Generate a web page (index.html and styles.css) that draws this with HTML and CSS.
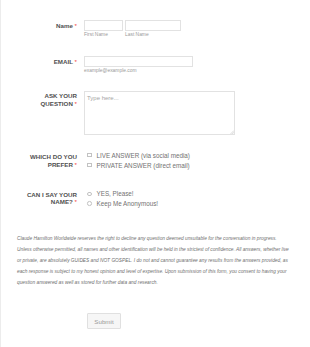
FILE: index.html
```html
<!DOCTYPE html>
<html lang="en">
<head>
    <meta charset="UTF-8">
    <meta name="viewport" content="width=device-width, initial-scale=1.0">
    <title>Ask Your Question</title>
    <link rel="stylesheet" href="styles.css">
</head>
<body>
    <form class="form" action="javascript:void(0);">
        <!-- name -->
        <div class="form-line line-name">
            <label class="form-label">Name <span class="req">*</span></label>
            <div class="form-input">
                <div class="name-row">
                    <div class="name-part">
                        <input type="text" class="text-input first-name">
                        <span class="sublabel">First Name</span>
                    </div>
                    <div class="name-part">
                        <input type="text" class="text-input last-name">
                        <span class="sublabel">Last Name</span>
                    </div>
                </div>
            </div>
        </div>

        <!-- email -->
        <div class="form-line line-email">
            <label class="form-label">EMAIL <span class="req">*</span></label>
            <div class="form-input">
                <input type="email" class="text-input email">
                <span class="sublabel">example@example.com</span>
            </div>
        </div>

        <!-- question -->
        <div class="form-line line-question">
            <label class="form-label multi">ASK YOUR<br>QUESTION <span class="req">*</span></label>
            <div class="form-input question-wrap">
                <textarea class="question" placeholder="Type here..."></textarea>
                <svg class="grip" width="4" height="4" viewBox="0 0 4 4"><path d="M4 0.5 L0.5 4 M4 2.2 L2.2 4" stroke="#b5b5b5" stroke-width="0.5" fill="none"/></svg>
            </div>
        </div>

        <!-- prefer -->
        <div class="form-line line-prefer">
            <label class="form-label multi">WHICH DO YOU<br>PREFER <span class="req">*</span></label>
            <div class="form-input options">
                <label class="option"><input type="checkbox" class="box"> LIVE ANSWER (via social media)</label>
                <label class="option"><input type="checkbox" class="box"> PRIVATE ANSWER (direct email)</label>
            </div>
        </div>

        <!-- say name -->
        <div class="form-line line-sayname">
            <label class="form-label multi">CAN I SAY YOUR<br>NAME? <span class="req">*</span></label>
            <div class="form-input options">
                <label class="option"><input type="radio" name="sayname" class="box round"> YES, Please!</label>
                <label class="option"><input type="radio" name="sayname" class="box round"> Keep Me Anonymous!</label>
            </div>
        </div>

        <p class="notice">Claude Hamilton Worldwide reserves the right to decline any question deemed unsuitable for the conversation in progress.<br>Unless otherwise permitted, all names and other identification will be held in the strictest of confidence. All answers, whether live<br>or private, are absolutely GUIDES and NOT GOSPEL. I do not and cannot guarantee any results from the answers provided, as<br>each response is subject to my honest opinion and level of expertise. Upon submission of this form, you consent to having your<br>question answered as well as stored for further data and research.</p>

        <button type="submit" class="submit-btn">Submit</button>
    </form>
</body>
</html>
```

FILE: styles.css
```css
* {
    margin: 0;
    padding: 0;
    box-sizing: border-box;
}

body {
    background-color: #fff;
    font-family: "Liberation Sans", Arial, sans-serif;
    color: #555;
}

.form {
    min-height: 100vh;
    padding-top: 20px;
    border-left: 1px solid #ececec;
}

.form-line {
    display: flex;
    align-items: flex-start;
}

.form-label {
    width: 76px;
    flex-shrink: 0;
    text-align: right;
    font-size: 6.2px;
    font-weight: 700;
    line-height: 11px;
    color: #505050;
}

.form-label.multi {
    line-height: 7.5px;
}

.req {
    color: #f23a3c;
    font-weight: 400;
}

.form-input {
    margin-left: 7px;
}

.text-input {
    display: block;
    height: 11px;
    border: 1px solid #e2e2e2;
    background: #fff;
    outline: none;
}

.name-row {
    display: flex;
    gap: 2px;
}

.first-name {
    width: 39px;
}

.last-name {
    width: 56px;
}

.email {
    width: 109px;
}

.sublabel {
    display: block;
    font-size: 4.9px;
    line-height: 7px;
    color: #9a9a9a;
}

/* 每一行的间距 */

.line-email {
    margin-top: 18px;
}

.line-question {
    margin-top: 17px;
}

.line-question .form-label {
    padding-top: 1px;
}

.question-wrap {
    position: relative;
}

.question {
    display: block;
    width: 151px;
    height: 44px;
    padding: 2px 2px;
    border: 1px solid #e2e2e2;
    font-family: "Liberation Sans", Arial, sans-serif;
    font-size: 6px;
    line-height: 8px;
    color: #555;
    resize: none;
    outline: none;
}

.question::placeholder {
    color: #a5a5a5;
}

/* 右下角的拖拽角 */
.grip {
    position: absolute;
    right: 1.5px;
    bottom: 1.5px;
    display: block;
}

.line-prefer {
    margin-top: 15px;
}

.line-prefer .form-label {
    padding-top: 3px;
}

.line-sayname {
    margin-top: 19px;
}

.line-sayname .form-label {
    padding-top: 1.5px;
}

.options {
    display: flex;
    flex-direction: column;
}

.option {
    display: flex;
    align-items: center;
    gap: 5px;
    height: 10px;
    padding-left: 3px;
    font-size: 6.3px;
    color: #727272;
    white-space: nowrap;
}

.line-sayname .option {
    height: 9.5px;
}

.box {
    -webkit-appearance: none;
    appearance: none;
    width: 4.5px;
    height: 4.5px;
    flex-shrink: 0;
    border: 0.6px solid #c2c2c2;
    background: #fff;
}

.box.round {
    border-radius: 50%;
}

.notice {
    margin-top: 24.5px;
    padding-left: 16px;
    font-size: 4.8px;
    font-style: italic;
    line-height: 11px;
    color: #707070;
    white-space: nowrap;
}

.submit-btn {
    display: block;
    width: 34px;
    height: 16px;
    margin-top: 25.5px;
    margin-left: 86px;
    border: 1px solid #e0e0e0;
    border-radius: 1px;
    background-color: #f6f6f6;
    font-family: "Liberation Sans", Arial, sans-serif;
    font-size: 6.2px;
    color: #999;
    cursor: pointer;
}
```
